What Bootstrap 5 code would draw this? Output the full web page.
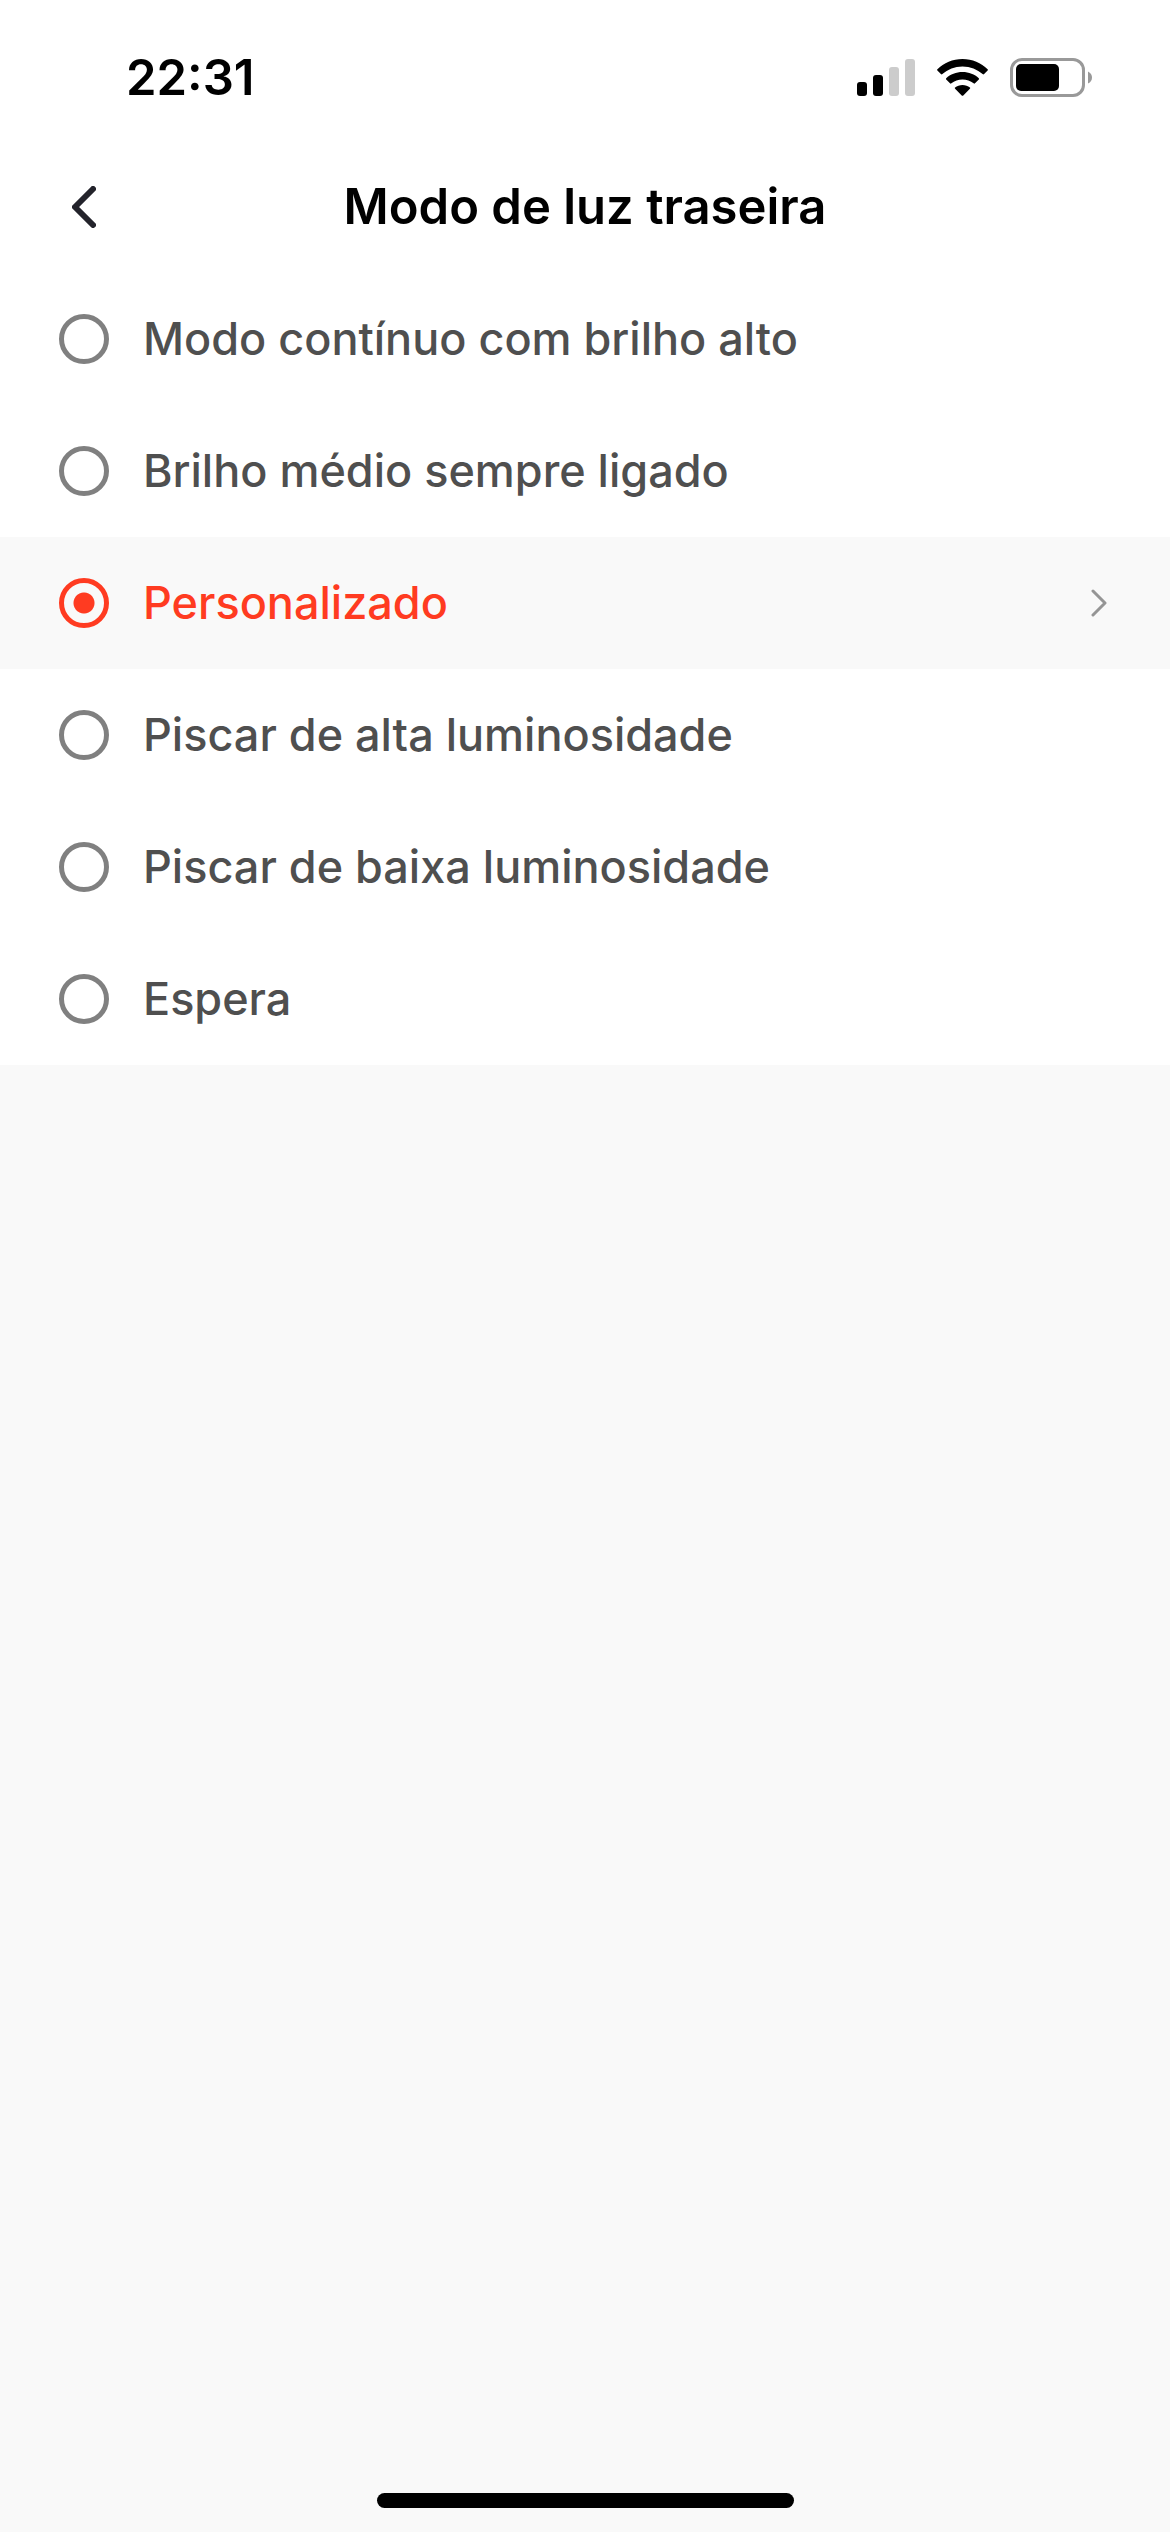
<!DOCTYPE html>
<html lang="pt">
<head>
<meta charset="utf-8">
<meta name="viewport" content="width=device-width, initial-scale=1">
<title>Modo de luz traseira</title>
<link href="https://cdn.jsdelivr.net/npm/bootstrap@5.3.0/dist/css/bootstrap.min.css" rel="stylesheet">
<style>
  body { font-family: Inter, "Liberation Sans", sans-serif; background: #f9f9f9; color: #000; }
  .status-bar { height: 141px; padding: 14px 78px 0 126px; }
  .status-bar svg { display: block; }
  .clock, .screen-title { font-size: 49px; line-height: 60px; font-weight: 600; }
  .status-icons { gap: 22px; }
  .title-bar { height: 132px; padding: 0 36px; }
  .side-slot { width: 96px; height: 96px; }
  .mode-item { min-height: 132px; padding: 0 59px; gap: 34px; color: #4f4f4f; background: #fff; }
  .mode-item .form-check-input { width: 50px; height: 50px; border: 5px solid #808080; background: none; }
  .mode-item .form-check-input:checked { border-color: #ff3b21; background: radial-gradient(circle, #ff3b21 9px, #ff3b21 10px, transparent 11px); }
  .mode-item .form-check-label { font-size: 45px; line-height: 54px; font-weight: 500; }
  .mode-item.chosen { background: #f9f9f9; color: #ff3b21; }
  .home-bar { width: 417px; height: 15px; margin-bottom: 24px; background: #000; }
</style>
<script src="https://cdn.jsdelivr.net/npm/bootstrap@5.3.0/dist/js/bootstrap.bundle.min.js"></script>
</head>
<body>
<div class="d-flex flex-column min-vh-100">
  <header class="bg-white">
    <div class="status-bar d-flex align-items-center justify-content-between">
      <span class="clock">22:31</span>
      <div class="status-icons d-flex align-items-center">
        <svg width="58" height="37" viewBox="0 0 58 37" role="img" aria-label="Sinal">
          <rect y="23" width="10" height="14" rx="3"/>
          <rect x="16" y="16" width="10" height="21" rx="3"/>
          <rect x="32" y="8" width="10" height="29" rx="3" fill="#ccc"/>
          <rect x="48" width="10" height="37" rx="3" fill="#ccc"/>
        </svg>
        <svg width="51" height="37" viewBox="0 0 51 37" role="img" aria-label="Wi-Fi">
          <path d="M25.500 0C35.300 0 44.200 3.800 50.600 10.200Q51.200 10.900 50.600 11.600L47.100 15.100Q46.300 15.800 45.600 15.100C40.300 10.300 33.300 7.400 25.500 7.400S10.700 10.300 5.400 15.100Q4.700 15.800 3.900 15.100L.4 11.600Q-.2 10.900 .4 10.200C6.800 3.800 15.700 0 25.500 0Z"/>
          <path d="M25.500 13C31.900 13 37.600 15.300 41.800 19.200Q42.400 19.900 41.800 20.600L38 24.300Q37.300 25 36.600 24.300C33.500 21.800 29.700 20.400 25.500 20.400S17.500 21.800 14.400 24.300Q13.700 25 13 24.300L9.200 20.600Q8.600 19.900 9.200 19.200C13.400 15.300 19.100 13 25.500 13Z"/>
          <path d="M25.500 26C28.300 26 31 26.900 32.900 28.400Q33.600 29.100 32.900 29.800L26.300 36.500Q25.500 37.200 24.700 36.500L18.100 29.800Q17.400 29.100 18.100 28.400C20 26.900 22.700 26 25.500 26Z"/>
        </svg>
        <svg width="82" height="39" viewBox="0 0 82 39" role="img" aria-label="Bateria">
          <rect x="1.500" y="1.500" width="72" height="36" rx="10.500" fill="none" stroke="#999" stroke-width="3"/>
          <rect x="6" y="6" width="43" height="27" rx="5"/>
          <path d="M78 13.500Q82 15.500 82 19.500T78 25.500Z" fill="#999"/>
        </svg>
      </div>
    </div>
    <nav class="title-bar d-flex align-items-center justify-content-between" aria-label="Cabeçalho">
      <button type="button" class="side-slot btn border-0 p-0 d-flex align-items-center justify-content-center" aria-label="Voltar">
        <svg width="24" height="42" viewBox="0 0 24 42" fill="none" stroke="#23232b" stroke-width="6" stroke-linecap="round" stroke-linejoin="round"><path d="M21 3L3 21L21 39"/></svg>
      </button>
      <h1 class="screen-title m-0">Modo de luz traseira</h1>
      <span class="side-slot"></span>
    </nav>
  </header>
  <main class="flex-grow-1">
    <form class="list-group list-group-flush">
      <div class="mode-item d-flex align-items-center">
        <input class="form-check-input m-0 flex-shrink-0" type="radio" name="mode" id="m1">
        <label class="form-check-label flex-grow-1" for="m1">Modo contínuo com brilho alto</label>
      </div>
      <div class="mode-item d-flex align-items-center">
        <input class="form-check-input m-0 flex-shrink-0" type="radio" name="mode" id="m2">
        <label class="form-check-label flex-grow-1" for="m2">Brilho médio sempre ligado</label>
      </div>
      <div class="mode-item chosen d-flex align-items-center">
        <input class="form-check-input m-0 flex-shrink-0" type="radio" name="mode" id="m3" checked>
        <label class="form-check-label flex-grow-1" for="m3">Personalizado</label>
        <a href="#" class="d-flex" aria-label="Editar personalizado">
          <svg width="20" height="28" viewBox="0 0 20 28" fill="none" stroke="#959595" stroke-width="3" stroke-linecap="round" stroke-linejoin="round"><path d="M2 2L14 14L2 26"/></svg>
        </a>
      </div>
      <div class="mode-item d-flex align-items-center">
        <input class="form-check-input m-0 flex-shrink-0" type="radio" name="mode" id="m4">
        <label class="form-check-label flex-grow-1" for="m4">Piscar de alta luminosidade</label>
      </div>
      <div class="mode-item d-flex align-items-center">
        <input class="form-check-input m-0 flex-shrink-0" type="radio" name="mode" id="m5">
        <label class="form-check-label flex-grow-1" for="m5">Piscar de baixa luminosidade</label>
      </div>
      <div class="mode-item d-flex align-items-center">
        <input class="form-check-input m-0 flex-shrink-0" type="radio" name="mode" id="m6">
        <label class="form-check-label flex-grow-1" for="m6">Espera</label>
      </div>
    </form>
  </main>
  <div class="home-bar rounded-pill mx-auto"></div>
</div>
</body>
</html>
